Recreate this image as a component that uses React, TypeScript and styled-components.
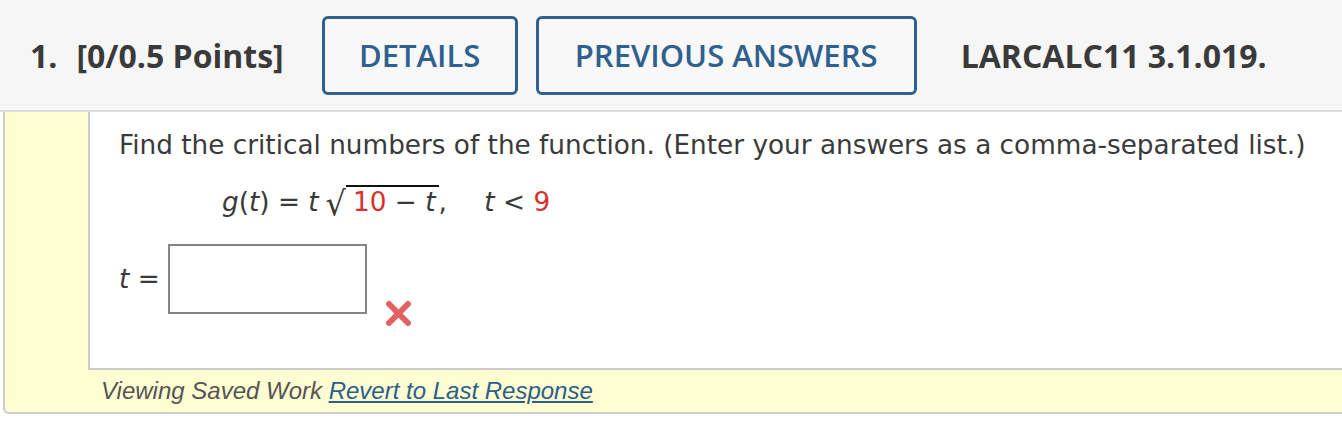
import styled, { createGlobalStyle } from 'styled-components';

const GlobalStyle = createGlobalStyle`
  body {
    margin: 0;
    background: #ffffff;
  }
`;

const Page = styled.div`
  width: 1342px;
  height: 442px;
  overflow: hidden;
`;

const Header = styled.div`
  display: flex;
  align-items: center;
  height: 110px;
  padding-left: 30px;
  background-color: #f6f6f6;
  border-bottom: 2px solid #dddddd;
  font-family: 'Open Sans', sans-serif;
  font-weight: 700;
  font-size: 32px;
  color: #3a3a3a;
  white-space: nowrap;
`;

const QuestionNumber = styled.span`
  margin-right: 19px;
`;

const Points = styled.span`
  margin-right: 38px;
`;

const HeaderButton = styled.button`
  display: flex;
  align-items: center;
  justify-content: center;
  height: 79px;
  width: ${(p: { $width: number }) => p.$width}px;
  margin-right: 18px;
  padding: 0;
  border: 3px solid #2f6190;
  border-radius: 6px;
  background: #f8f8f8;
  font-family: 'Open Sans', sans-serif;
  font-weight: 600;
  font-size: 31px;
  color: #2f6190;
  cursor: pointer;
`;

const RefLabel = styled.span`
  margin-left: 26px;
`;

const Panel = styled.div`
  margin-left: 3px;
  background-color: #fffdd2;
  border-left: 2px solid #cccccc;
  border-bottom: 2px solid #cccccc;
  border-bottom-left-radius: 6px;
`;

const Content = styled.div`
  margin-left: 83px;
  height: 258px;
  padding: 17px 0 0 29px;
  box-sizing: border-box;
  background: #ffffff;
  border-left: 2px solid #cccccc;
  border-bottom: 2px solid #cccccc;
  font-family: 'DejaVu Sans', Verdana, sans-serif;
  font-size: 26.3px;
  color: #3a3a3a;
`;

const Prompt = styled.p`
  margin: 0;
  line-height: 32px;
  white-space: nowrap;
`;

const MathLine = styled.div`
  margin: 23px 0 0 103px;
  line-height: 32px;
  white-space: pre;
`;

const Var = styled.i`
  font-style: italic;
`;

const Red = styled.span`
  color: #d6322b;
`;

const Radical = styled.span`
  display: inline-block;
  margin: 0 0 0 7px;
  font-size: 32px;
  transform: translateY(4px) scaleY(1.05);
  transform-origin: bottom;
`;

const Radicand = styled.span`
  border-top: 2px solid #111111;
  padding: 0 3px 0 7px;
`;

const Condition = styled.span`
  margin-left: 4px;
`;

const AnswerRow = styled.div`
  display: flex;
  align-items: center;
  margin-top: 26px;
`;

const AnswerLabel = styled.span`
  margin-right: 8px;
  white-space: pre;
`;

const AnswerInput = styled.input`
  width: 199px;
  height: 70px;
  box-sizing: border-box;
  border: 2px solid #858585;
  background: #ffffff;
  margin: 0;
`;

const WrongMark = styled.svg`
  align-self: flex-start;
  margin: 56px 0 -20px 17px;
`;

const Footer = styled.div`
  padding-left: 96px;
  height: 42px;
  line-height: 42px;
  font-family: 'Liberation Sans', Arial, sans-serif;
  font-style: italic;
  font-size: 24px;
  color: #555555;
`;

const RevertLink = styled.a`
  color: #2b5f8a;
  text-decoration: underline;
`;

export default function App() {
  return (
    <Page>
      <GlobalStyle />
      <Header>
        <QuestionNumber>1.</QuestionNumber>
        <Points>[0/0.5 Points]</Points>
        <HeaderButton $width={196}>DETAILS</HeaderButton>
        <HeaderButton $width={381}>PREVIOUS ANSWERS</HeaderButton>
        <RefLabel>LARCALC11 3.1.019.</RefLabel>
      </Header>
      <Panel>
        <Content>
          <Prompt>
            Find the critical numbers of the function. (Enter your answers as a comma-separated list.)
          </Prompt>
          <MathLine>
            <Var>g</Var>(<Var>t</Var>) = <Var>t</Var>
            <Radical>√</Radical>
            <Radicand>
              <Red>10</Red> − <Var>t</Var>
            </Radicand>
            ,
            <Condition>
              {'    '}
              <Var>t</Var> &lt; <Red>9</Red>
            </Condition>
          </MathLine>
          <AnswerRow>
            <AnswerLabel>
              <Var>t</Var> =
            </AnswerLabel>
            <AnswerInput type="text" />
            <WrongMark width="29" height="27" viewBox="0 0 29 27">
              <path
                d="M5 4 L24 23 M24 4 L5 23"
                stroke="#e05050"
                strokeWidth="6"
                strokeLinecap="round"
                opacity="0.9"
              />
            </WrongMark>
          </AnswerRow>
        </Content>
        <Footer>
          Viewing Saved Work <RevertLink href="#">Revert to Last Response</RevertLink>
        </Footer>
      </Panel>
    </Page>
  );
}
